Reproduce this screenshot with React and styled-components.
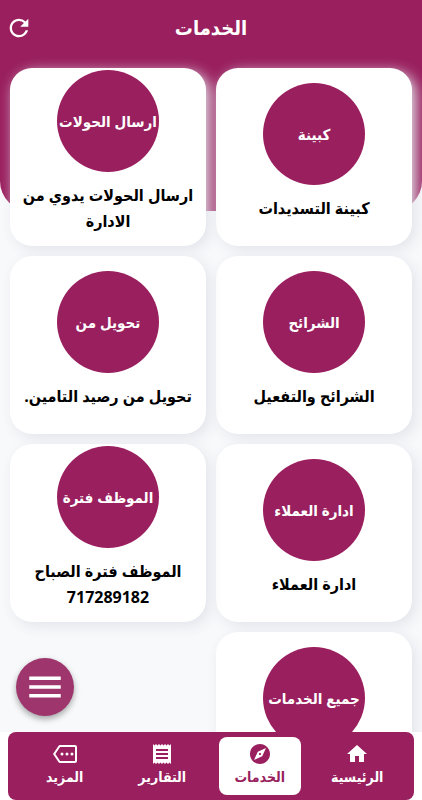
import React, { useState } from "react";
import styled, { createGlobalStyle, css } from "styled-components";
import {
  MdExplore,
  MdHome,
  MdMenu,
  MdOutlineMore,
  MdReceipt,
  MdRefresh,
} from "react-icons/md";

const services = [
  { id: 1, badge: "كبينة", title: "كبينة التسديدات" },
  { id: 2, badge: "ارسال الحولات", title: "ارسال الحولات يدوي من الادارة" },
  { id: 3, badge: "الشرائح", title: "الشرائح والتفعيل" },
  { id: 4, badge: "تحويل من", title: "تحويل من رصيد التامين." },
  { id: 5, badge: "ادارة العملاء", title: "ادارة العملاء" },
  { id: 6, badge: "الموظف فترة", title: "الموظف فترة الصباح 717289182" },
  { id: 7, badge: "جميع الخدمات" },
];

const tabs = [
  { id: "home", label: "الرئيسية", icon: MdHome },
  { id: "services", label: "الخدمات", icon: MdExplore },
  { id: "reports", label: "التقارير", icon: MdReceipt },
  { id: "more", label: "المزيد", icon: MdOutlineMore },
];

const GlobalStyle = createGlobalStyle`
  :root {
    --primary: #991f5e;
    --surface: #f8f9fb;
  }

  * {
    box-sizing: border-box;
  }

  body {
    margin: 0;
    background: #fff;
    font-family: "Open Sans", "DejaVu Sans Condensed", "DejaVu Sans", sans-serif;
  }

  button {
    border: 0;
    padding: 0;
    background: none;
    font: inherit;
    color: inherit;
    cursor: pointer;
  }
`;

const Screen = styled.div`
  position: relative;
  display: flex;
  flex-direction: column;
  height: 100vh;
  overflow: hidden;
`;

const Body = styled.div`
  flex: 1;
  min-height: 0;
  display: flex;
  flex-direction: column;
  background: var(--surface);
`;

/* the coloured header continues behind the first row of cards */
const Header = styled.header`
  flex: none;
  height: 211px;
  margin-bottom: -155px;
  border-radius: 0 0 30px 30px;
  background: var(--primary);
  color: #fff;
`;

const Toolbar = styled.div`
  display: grid;
  grid-template-columns: 38px 1fr 38px;
  align-items: center;
  height: 56px;

  button {
    grid-column: 3;
    display: flex;
    justify-content: center;
  }
`;

const Title = styled.h1`
  grid-column: 2;
  margin: 0;
  text-align: center;
  font-size: 20px;
  line-height: 28px;
  font-weight: 700;
`;

const Scroller = styled.main`
  position: relative;
  flex: 1;
  min-height: 0;
  overflow-y: auto;
  scrollbar-width: none;
`;

const Grid = styled.div`
  display: grid;
  grid-template-columns: 1fr 1fr;
  grid-auto-rows: 178px;
  gap: 10px;
  padding: 12px 10px;
`;

const Card = styled.button`
  display: flex;
  flex-direction: column;
  align-items: center;
  justify-content: center;
  border-radius: 22px;
  background: #fff;
  box-shadow: 4px 4px 14px #e2e4ea;
`;

const Circle = styled.span`
  flex: none;
  display: flex;
  align-items: center;
  justify-content: center;
  width: 102px;
  height: 102px;
  border-radius: 50%;
  background: var(--primary);
  color: #fff;
  font-size: 15px;
  font-weight: 700;
  white-space: nowrap;
`;

const CardTitle = styled.span`
  min-height: 46px;
  padding: 10px 8px;
  color: #000;
  font-size: 16px;
  line-height: 26px;
  font-weight: 700;
  text-align: center;
`;

const MenuButton = styled.button`
  position: absolute;
  left: 16px;
  bottom: 84px;
  display: flex;
  align-items: center;
  justify-content: center;
  width: 58px;
  height: 58px;
  border-radius: 50%;
  && {
    background: #9e356c;
    color: #fff;
  }
  box-shadow: 0 3px 6px rgba(0, 0, 0, 0.35);
`;

const Nav = styled.nav`
  display: flex;
  margin: 0 8px;
  padding: 5px 8px;
  border-radius: 8px;
  background: var(--primary);
`;

const Tab = styled.button`
  flex: 1;
  display: flex;
  flex-direction: column;
  align-items: center;
  height: 58px;
  margin: 0 8px;
  padding-top: 5px;
  border-radius: 8px;
  color: #fff;
  font-size: 14px;
  line-height: 22px;
  font-weight: 700;
  white-space: nowrap;

  ${({ $active }) =>
    $active &&
    css`
      background: #fff;
      color: var(--primary);
    `}
`;

const ServiceCard = ({ badge, title }) => (
  <Card type="button">
    <Circle>{badge}</Circle>
    <CardTitle>{title}</CardTitle>
  </Card>
);

export default function App() {
  const [active, setActive] = useState("services");

  return (
    <Screen dir="rtl" lang="ar">
      <GlobalStyle />
      <Body>
        <Header>
          <Toolbar>
            <Title>الخدمات</Title>
            <button type="button" aria-label="تحديث">
              <MdRefresh size={28} />
            </button>
          </Toolbar>
        </Header>
        <Scroller>
          <Grid>
            {services.map((item) => (
              <ServiceCard key={item.id} {...item} />
            ))}
          </Grid>
        </Scroller>
      </Body>
      <MenuButton type="button" aria-label="القائمة">
        <MdMenu size={42} />
      </MenuButton>
      <Nav>
        {tabs.map(({ id, label, icon: Icon }) => (
          <Tab
            key={id}
            type="button"
            $active={id === active}
            onClick={() => setActive(id)}
          >
            <Icon size={24} />
            {label}
          </Tab>
        ))}
      </Nav>
    </Screen>
  );
}
